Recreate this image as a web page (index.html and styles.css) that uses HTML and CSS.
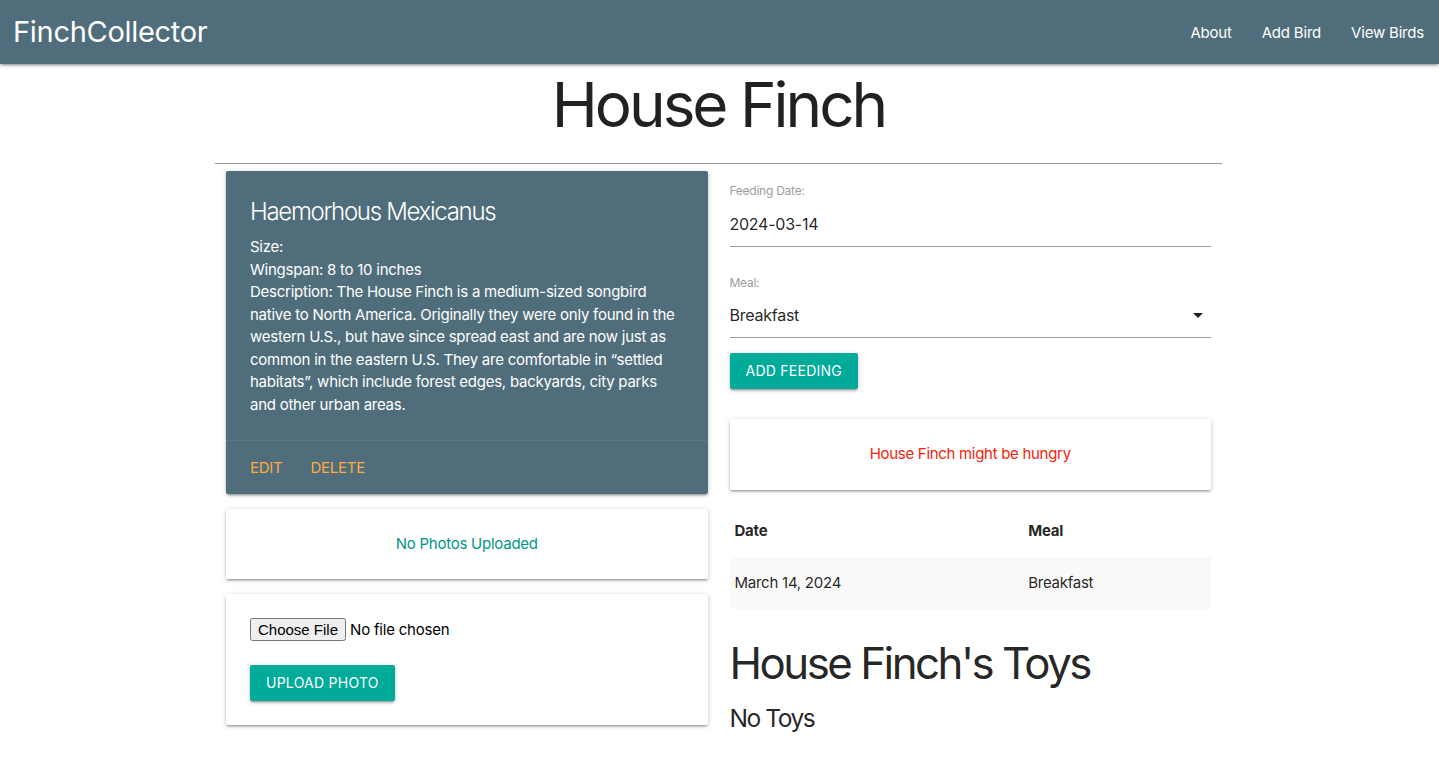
FILE: index.html
```html
<!DOCTYPE html>
<html lang="en">
<head>
<meta charset="utf-8">
<title>FinchCollector</title>
<link rel="stylesheet" href="styles.css">
</head>
<body>
<nav class="navbar">
  <a class="brand" href="#">FinchCollector</a>
  <ul class="nav-links">
    <li><a href="#">About</a></li>
    <li><a href="#">Add Bird</a></li>
    <li><a href="#">View Birds</a></li>
  </ul>
</nav>
<main class="container">
  <h1 class="page-title">House Finch</h1>
  <hr class="divider">
  <div class="row">
    <div class="col">
      <div class="card card-dark">
        <div class="card-content">
          <span class="card-title">Haemorhous Mexicanus</span>
          <p>Size: </p>
          <p>Wingspan: 8 to 10 inches</p>
          <p>Description: The House Finch is a medium-sized songbird native to North America. Originally they were only found in the western U.S., but have since spread east and are now just as common in the eastern U.S. They are comfortable in “settled habitats”, which include forest edges, backyards, city parks and other urban areas.</p>
        </div>
        <div class="card-action">
          <a href="#">Edit</a>
          <a href="#">Delete</a>
        </div>
      </div>
      <div class="card">
        <div class="card-content center teal-text">No Photos Uploaded</div>
      </div>
      <div class="card">
        <div class="card-content">
          <input class="file-input" type="file">
          <button class="btn upload-btn" type="button">Upload Photo</button>
        </div>
      </div>
    </div>
    <div class="col">
      <form class="feed-form">
        <div class="field">
          <label class="field-label">Feeding Date:</label>
          <div class="field-input">2024-03-14</div>
        </div>
        <div class="field">
          <label class="field-label">Meal:</label>
          <div class="field-input select">Breakfast<span class="caret"></span></div>
        </div>
        <button class="btn" type="button">Add Feeding</button>
      </form>
      <div class="card hungry-card">
        <div class="card-content center red-text">House Finch might be hungry</div>
      </div>
      <table class="striped">
        <colgroup><col class="col-date"><col></colgroup>
        <thead>
          <tr><th>Date</th><th>Meal</th></tr>
        </thead>
        <tbody>
          <tr><td>March 14, 2024</td><td>Breakfast</td></tr>
        </tbody>
      </table>
      <h3 class="toys-title">House Finch's Toys</h3>
      <h5 class="no-toys">No Toys</h5>
    </div>
  </div>
</main>
</body>
</html>
```
FILE: styles.css
```css
* { box-sizing: border-box; }
html { font-size: 15px; }
body {
  margin: 0;
  font-family: Inter, "Noto Sans", "Liberation Sans", sans-serif;
  font-size: 15px;
  line-height: 1.5;
  letter-spacing: -0.25px;
  color: rgba(0,0,0,0.87);
  background: #fff;
}
a { text-decoration: none; }

.navbar {
  height: 64px;
  background: #4f6d7a;
  display: flex;
  align-items: center;
  justify-content: space-between;
  box-shadow: 0 2px 2px 0 rgba(0,0,0,.14), 0 3px 1px -2px rgba(0,0,0,.12), 0 1px 5px 0 rgba(0,0,0,.2);
  position: relative;
  z-index: 2;
}
.brand {
  color: #fff;
  font-size: 29px;
  padding-left: 13px;
  line-height: 66px;
  letter-spacing: -0.3px;
}
.nav-links {
  list-style: none;
  margin: 0;
  padding: 0;
  display: flex;
  height: 64px;
}
.nav-links a {
  display: block;
  color: #fff;
  padding: 0 15px;
  line-height: 66px;
  font-size: 15px;
  letter-spacing: -0.2px;
}

.container {
  width: 1007px;
  margin: 0 auto;
  position: relative;
  left: -1px;
}
.page-title {
  font-size: 62px;
  font-weight: 400;
  line-height: 1.1;
  text-align: center;
  margin: 7px 0 24px;
  letter-spacing: -3px;
}
.divider {
  border: 0;
  border-top: 1px solid #9a9a9a;
  margin: 0;
  height: 0;
}
.row {
  display: flex;
}
.col {
  flex: 1 1 50%;
  padding: 0 11px;
  min-width: 0;
}

.card {
  background: #fff;
  border-radius: 2px;
  margin: 7px 0 15px;
  box-shadow: 0 2px 2px 0 rgba(0,0,0,.14), 0 3px 1px -2px rgba(0,0,0,.12), 0 1px 5px 0 rgba(0,0,0,.2);
}
.card-content {
  padding: 24px;
}
.card-content p { margin: 0; }
.card-dark {
  background: #4f6d7a;
  color: #fff;
}
.card-title {
  display: block;
  font-size: 24px;
  font-weight: 300;
  line-height: 32px;
  margin-bottom: 8px;
  padding-top: 1px;
  letter-spacing: -1.3px;
}
.card-action {
  border-top: 1px solid rgba(160,160,160,.2);
  padding: 16px 24px 14px;
}
.card-action a {
  color: #ffab40;
  text-transform: uppercase;
  margin-right: 24px;
}
.center { text-align: center; }
.teal-text { color: #009688; }
.red-text { color: #f8220c; letter-spacing: -0.3px; }

.file-input {
  display: block;
  font-family: inherit;
  font-size: 15px;
  color: #000;
  height: 23px;
  letter-spacing: -0.2px;
}
.btn {
  display: inline-block;
  height: 36px;
  line-height: 36px;
  padding: 0 16px;
  border: none;
  border-radius: 2px;
  background: #00ab9a;
  color: #fff;
  font-family: inherit;
  font-size: 14px;
  letter-spacing: .25px;
  text-transform: uppercase;
  box-shadow: 0 2px 2px 0 rgba(0,0,0,.14), 0 3px 1px -2px rgba(0,0,0,.12), 0 1px 5px 0 rgba(0,0,0,.2);
}
.upload-btn { margin-top: 24px; }

.feed-form { padding-top: 20px; }
.field { margin-bottom: 29px; }
.field:last-of-type { margin-bottom: 15px; }
.field-label {
  display: block;
  font-size: 12px;
  line-height: 14px;
  color: #9e9e9e;
  margin-bottom: 3px;
}
.field-input {
  height: 46px;
  line-height: 44px;
  border-bottom: 1px solid #9e9e9e;
  font-size: 16px;
  color: rgba(0,0,0,.87);
  display: flex;
  align-items: center;
  justify-content: space-between;
}
.field-input.select { height: 45px; }
.caret {
  width: 0;
  height: 0;
  border-left: 5px solid transparent;
  border-right: 5px solid transparent;
  border-top: 5px solid rgba(0,0,0,.87);
  margin-right: 8px;
}
.hungry-card {
  margin-top: 30px;
}

table.striped {
  width: 100%;
  border-collapse: collapse;
}
.col-date { width: 61%; }
table.striped th, table.striped td {
  text-align: left;
  padding: 15px 5px;
  line-height: 22px;
}
table.striped th { font-weight: 700; }
table.striped tbody tr { background: #f9f9f9; }

.toys-title {
  font-size: 43.8px;
  font-weight: 400;
  line-height: 1.1;
  margin: 31px 0 17.5px;
  letter-spacing: -2.5px;
}
.no-toys {
  font-size: 24.6px;
  font-weight: 400;
  line-height: 1.1;
  margin: 0;
  letter-spacing: -1.5px;
}
```
